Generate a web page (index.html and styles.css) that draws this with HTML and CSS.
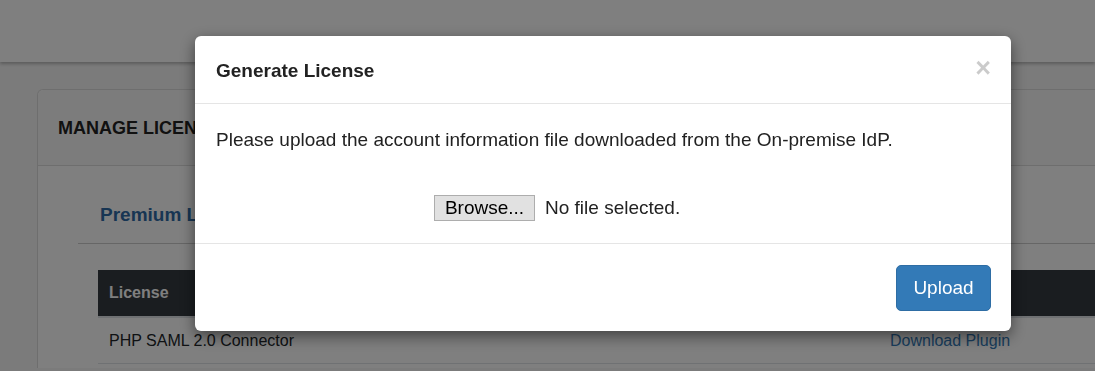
FILE: index.html
```html
<!DOCTYPE html>
<html lang="en">

<head>
    <meta charset="UTF-8">
    <meta name="viewport" content="width=device-width, initial-scale=1.0">
    <title>Manage Licenses</title>
    <link rel="stylesheet" href="styles.css">
</head>

<body>
    <div class="topbar"></div>

    <div class="main">
        <div class="card">
            <div class="card-header">Manage Licenses</div>
            <div class="card-body">
                <div class="section-title">Premium Licenses</div>
                <table class="license-table">
                    <thead>
                        <tr>
                            <th>License</th>
                            <th class="col-action"></th>
                        </tr>
                    </thead>
                    <tbody>
                        <tr>
                            <td>PHP SAML 2.0 Connector</td>
                            <td class="col-action"><a href="#">Download Plugin</a></td>
                        </tr>
                    </tbody>
                </table>
            </div>
        </div>
    </div>

    <!-- modal -->
    <div class="backdrop"></div>
    <div class="modal">
        <div class="modal-header">
            <span class="modal-title">Generate License</span>
            <span class="close">&times;</span>
        </div>
        <div class="modal-body">
            <p>Please upload the account information file downloaded from the On-premise IdP.</p>
            <div class="file-row">
                <span class="browse-btn">Browse...</span>
                <span class="file-name">No file selected.</span>
            </div>
        </div>
        <div class="modal-footer">
            <button type="button" class="btn-upload">Upload</button>
        </div>
    </div>
</body>

</html>
```

FILE: styles.css
```css
body {
    font-family: "Liberation Sans", Arial, sans-serif;
    background-color: #f6f6f6;
    margin: 0;
    padding: 0;
    color: #333333;
    overflow: hidden;
    height: 371px;
}

.topbar {
    height: 62px;
    background-color: #ffffff;
    box-shadow: 0 2px 3px rgba(0, 0, 0, 0.25);
}

.main {
    padding: 27px 0 0 37px;
}

.card {
    width: 1100px;
    background-color: #ffffff;
    border: 1px solid #dddddd;
    border-bottom: none;
    border-radius: 6px 6px 0 0;
}

.card-header {
    height: 75px;
    line-height: 76px;
    padding-left: 20px;
    font-size: 18px;
    font-weight: bold;
    text-transform: uppercase;
    color: #222222;
    background-color: #f9f9f9;
    border-bottom: 1px solid #dddddd;
    border-radius: 6px 6px 0 0;
}

.card-body {
    padding: 0 0 4px 40px;
}

.section-title {
    margin-top: 0;
    padding: 38px 0 17px 22px;
    font-size: 19px;
    font-weight: bold;
    color: #2f6ba6;
    border-bottom: 1px solid #cccccc;
}

.license-table {
    margin: 26px 0 0 20px;
    border-collapse: collapse;
    width: 1020px;
    font-size: 16px;
}

.license-table th {
    background-color: #343a40;
    color: #ffffff;
    text-align: left;
    height: 46px;
    padding: 0 11px;
    font-weight: bold;
    border-bottom: 2px solid #dee2e6;
}

.license-table td {
    height: 45px;
    padding: 0 11px;
    color: #212529;
    border-bottom: 1px solid #dee2e6;
}

.license-table .col-action {
    width: 217px;
}

.license-table a {
    color: #337ab7;
    text-decoration: none;
}

.backdrop {
    position: fixed;
    inset: 0;
    background-color: rgba(0, 0, 0, 0.5);
}

.modal {
    position: fixed;
    left: 195px;
    top: 36px;
    width: 816px;
    background-color: #ffffff;
    border-radius: 6px;
    box-shadow: 0 5px 15px rgba(0, 0, 0, 0.5);
    font-size: 19px;
}

.modal-header {
    display: flex;
    justify-content: space-between;
    align-items: center;
    height: 67px;
    padding: 0 20px 0 21px;
    border-bottom: 1px solid #e5e5e5;
}

.modal-title {
    font-weight: bold;
    color: #222222;
    margin-top: 2px;
}

.close {
    font-size: 27px;
    font-weight: bold;
    color: #000000;
    opacity: 0.2;
    margin-top: -2px;
}

.modal-body {
    padding: 23px 20px 22px 21px;
}

.modal-body p {
    margin: 0 0 43px;
    line-height: 25px;
    color: #222222;
}

.file-row {
    display: flex;
    align-items: center;
    gap: 10px;
    padding-left: 218px;
    height: 26px;
}

.browse-btn {
    box-sizing: border-box;
    width: 101px;
    height: 26px;
    line-height: 24px;
    text-align: center;
    background-color: #e1e1e1;
    border: 1px solid #adadad;
    color: #000000;
}

.file-name {
    color: #222222;
}

.modal-footer {
    display: flex;
    justify-content: flex-end;
    padding: 21px 20px 20px;
    border-top: 1px solid #e5e5e5;
}

.btn-upload {
    font-family: "Liberation Sans", Arial, sans-serif;
    font-size: 19px;
    color: #ffffff;
    background-color: #337ab7;
    border: 1px solid #2e6da4;
    border-radius: 5px;
    width: 95px;
    height: 46px;
    padding: 0;
}
```
